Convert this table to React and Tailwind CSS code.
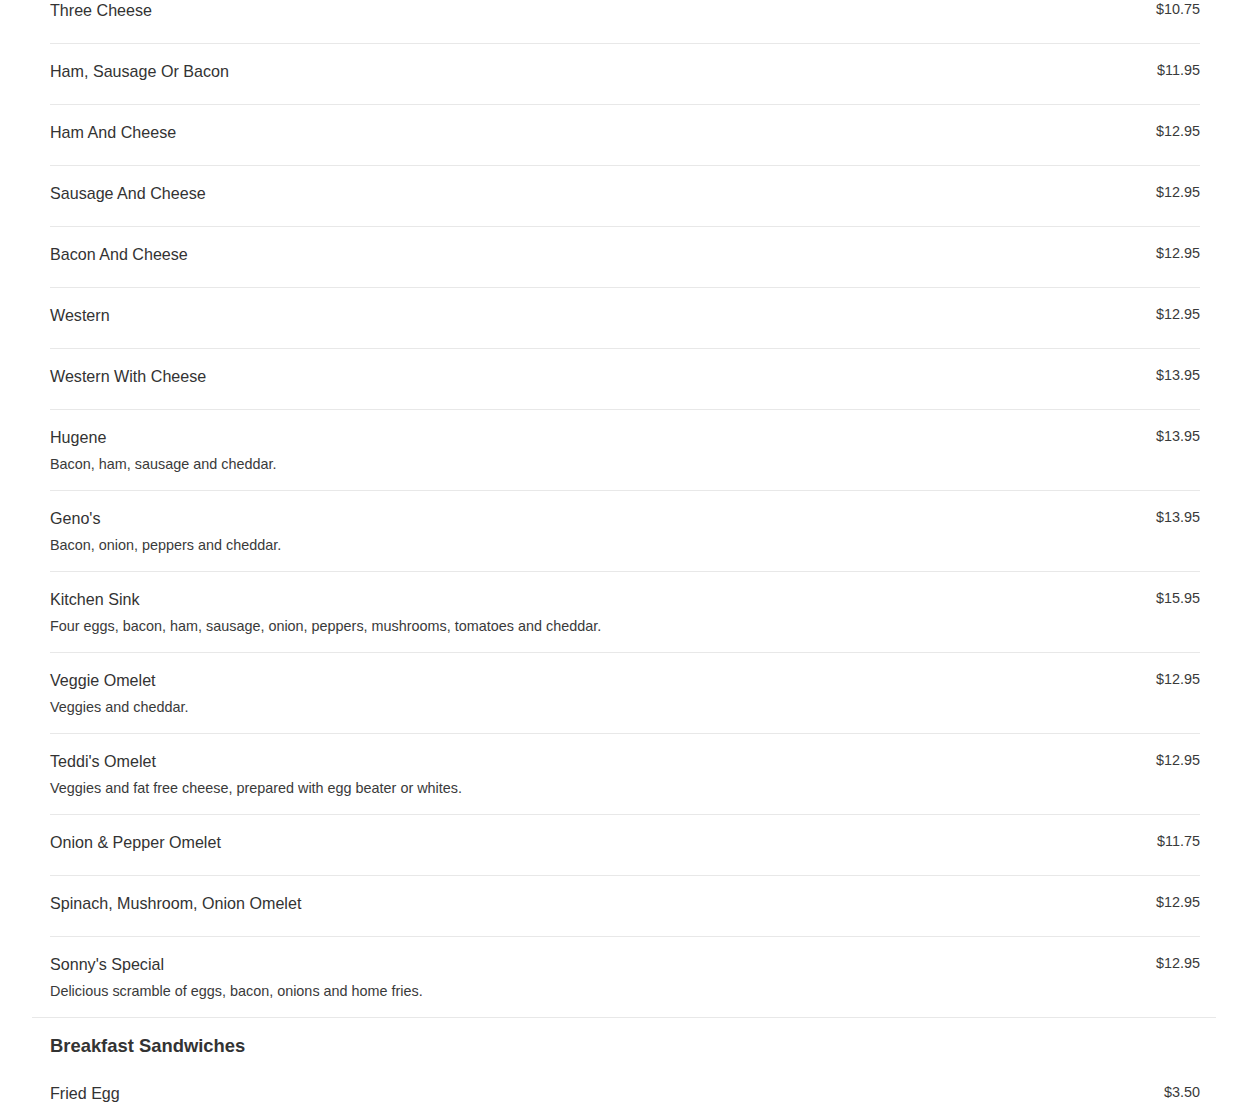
import React from "react";

const items = [
  ["Three Cheese", "$10.75"],
  ["Ham, Sausage Or Bacon", "$11.95"],
  ["Ham And Cheese", "$12.95"],
  ["Sausage And Cheese", "$12.95"],
  ["Bacon And Cheese", "$12.95"],
  ["Western", "$12.95"],
  ["Western With Cheese", "$13.95"],
  ["Hugene", "$13.95", "Bacon, ham, sausage and cheddar."],
  ["Geno's", "$13.95", "Bacon, onion, peppers and cheddar."],
  ["Kitchen Sink", "$15.95", "Four eggs, bacon, ham, sausage, onion, peppers, mushrooms, tomatoes and cheddar."],
  ["Veggie Omelet", "$12.95", "Veggies and cheddar."],
  ["Teddi's Omelet", "$12.95", "Veggies and fat free cheese, prepared with egg beater or whites."],
  ["Onion & Pepper Omelet", "$11.75"],
  ["Spinach, Mushroom, Onion Omelet", "$12.95"],
  ["Sonny's Special", "$12.95", "Delicious scramble of eggs, bacon, onions and home fries."],
];

function Row({ name, price, desc, last }) {
  return (
    <div className={"flex items-start justify-between pt-[16px] pb-[16px] " + (last ? "" : "border-b border-[#e8e8e8]")}>
      <div>
        <div className="text-[16.1px] leading-[22px] mb-[6px] text-[#333]">{name}</div>
        {desc && <div className="text-[14.4px] leading-[20px] text-[#3a3a3a]">{desc}</div>}
      </div>
      <div className="text-[14.4px] leading-[20px] text-[#3a3a3a]">{price}</div>
    </div>
  );
}

export default function App() {
  return (
    <div className="bg-white w-[1250px] h-[1111px] overflow-hidden" style={{ fontFamily: '"Liberation Sans", Arial, sans-serif' }}>
      <div className="mt-[-17px] ml-[32px] w-[1184px]">
        <div className="border-b border-[#e8e8e8] pl-[18px] pr-[16px]">
          {items.map((it, i) => (
            <Row key={i} name={it[0]} price={it[1]} desc={it[2]} last={i === items.length - 1} />
          ))}
        </div>
        <div className="pl-[18px] pr-[16px]">
          <h2 className="text-[18.4px] leading-[27px] font-bold text-[#333] pt-[14px] pb-[7px]">Breakfast Sandwiches</h2>
          <Row name="Fried Egg" price="$3.50" />
        </div>
      </div>
    </div>
  );
}
